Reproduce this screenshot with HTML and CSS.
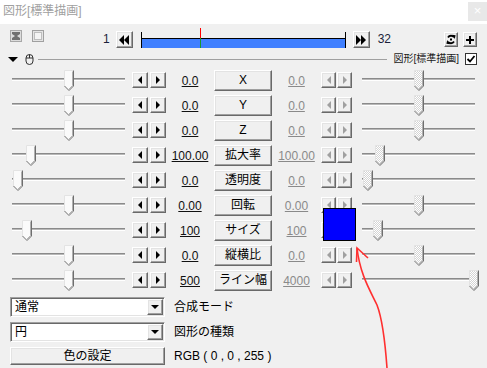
FILE: index.html
```html
<!DOCTYPE html>
<html lang="ja">
<head>
    <meta charset="UTF-8">
    <title>図形[標準描画]</title>
    <link rel="stylesheet" href="styles.css">
</head>
<body>
    <svg class="defs" width="0" height="0">
        <defs>
            <pattern id="dots" width="2" height="2" patternUnits="userSpaceOnUse">
                <rect width="2" height="2" fill="#ffffff"/>
                <rect width="1" height="1" fill="#d4d4d4"/>
                <rect x="1" y="1" width="1" height="1" fill="#d4d4d4"/>
            </pattern>
            <symbol id="thumb" viewBox="0 0 10 21">
                <polygon points="0.5,0.5 9.5,0.5 9.5,16 5,20.5 0.5,16" fill="#fafafa"/>
                <polyline points="0.5,16 0.5,0.5 9.5,0.5" fill="none" stroke="#e3e3e3"/>
                <polyline points="8.5,1.5 8.5,15.6 5,19.1" fill="none" stroke="#b0b0b0"/>
                <polyline points="9.5,0.5 9.5,16 5,20.5 0.5,16" fill="none" stroke="#6e6e6e"/>
            </symbol>
            <symbol id="thumb-off" viewBox="0 0 10 21">
                <polygon points="0.5,0.5 9.5,0.5 9.5,16 5,20.5 0.5,16" fill="url(#dots)"/>
                <polyline points="0.5,16 0.5,0.5 9.5,0.5" fill="none" stroke="#e3e3e3"/>
                <polyline points="8.5,1.5 8.5,15.6 5,19.1" fill="none" stroke="#b0b0b0"/>
                <polyline points="9.5,0.5 9.5,16 5,20.5 0.5,16" fill="none" stroke="#6e6e6e"/>
            </symbol>
        </defs>
    </svg>

    <div class="window">
        <div class="titlebar">
            <span class="title">図形[標準描画]</span>
            <span class="close">×</span>
        </div>

        <!-- frame toolbar -->
        <div class="toolbar">
            <svg class="tool-icon first" width="12" height="12" viewBox="0 0 12 12">
                <rect x="0.5" y="0.5" width="11" height="11" fill="#dcdcdc" stroke="#a8a8a8"/>
                <polygon points="2,2 10,2 10,4 7,6 10,8 10,10 2,10 2,8 5,6 2,4" fill="#707070"/>
            </svg>
            <svg class="tool-icon" width="12" height="12" viewBox="0 0 12 12">
                <rect x="0.5" y="0.5" width="11" height="11" fill="#e4e4e4" stroke="#a0a0a0"/>
                <rect x="2.5" y="2.5" width="7" height="7" fill="#f4f4f4" stroke="#909090" stroke-dasharray="1 1"/>
            </svg>
            <span class="frame-no start">1</span>
            <span class="btn seek back">
                <svg width="11" height="10" viewBox="0 0 11 10"><polygon points="5,0 5,10 0,5"/><polygon points="10,0 10,10 5,5"/></svg>
            </span>
            <div class="timeline">
                <div class="bar"><div class="bar-fill"></div></div>
                <div class="cursor" style="left:59px"></div>
            </div>
            <span class="btn seek fwd">
                <svg width="11" height="10" viewBox="0 0 11 10"><polygon points="0,0 0,10 5,5"/><polygon points="5,0 5,10 10,5"/></svg>
            </span>
            <span class="frame-no end">32</span>
            <span class="btn mini first-mini">
                <svg width="10" height="11" viewBox="0 0 10 11">
                    <path d="M2 3.5 A3.6 3.6 0 0 1 8 3.2" fill="none" stroke="#000" stroke-width="1.8"/>
                    <polygon points="6.2,0.8 9.6,1.2 8.8,5"/>
                    <path d="M8 7.5 A3.6 3.6 0 0 1 2 7.8" fill="none" stroke="#000" stroke-width="1.8"/>
                    <polygon points="3.8,10.2 0.4,9.8 1.2,6"/>
                    <rect x="4" y="4.5" width="2" height="2"/>
                </svg>
            </span>
            <span class="btn mini">
                <svg width="10" height="10" viewBox="0 0 10 10"><rect x="1" y="4" width="8" height="2"/><rect x="4" y="1" width="2" height="8"/></svg>
            </span>
        </div>

        <div class="layer-bar">
            <span class="collapse"></span>
            <svg class="mouse" width="9" height="11" viewBox="0 0 9 11">
                <path d="M1 4 Q1 0.5 4.5 0.5 Q8 0.5 8 4 V7 Q8 10.5 4.5 10.5 Q1 10.5 1 7 Z M1 4 H8 M4.5 0.5 V4" fill="none" stroke="#303030"/>
            </svg>
            <span class="rule"></span>
            <span class="layer-name">図形[標準描画]</span>
            <span class="checkbox">
                <svg width="10" height="10" viewBox="0 0 10 10"><polyline points="1.5,5 4,7.5 8.5,2" fill="none" stroke="#000" stroke-width="1.8"/></svg>
            </span>
        </div>

        <!-- track bars -->
        <div class="params">
            <div class="param-row">
                <div class="slider"><div class="track"></div><svg class="thumb" style="left:56px"><use href="#thumb"/></svg></div>
                <div class="spin"><span class="spin-btn"><i class="tri-l"></i></span><span class="spin-btn"><i class="tri-r"></i></span></div>
                <span class="value">0.0</span>
                <span class="label-btn">X</span>
                <span class="value off">0.0</span>
                <div class="spin off"><span class="spin-btn"><i class="tri-l"></i></span><span class="spin-btn"><i class="tri-r"></i></span></div>
                <div class="slider"><div class="track"></div><svg class="thumb" style="left:56px"><use href="#thumb-off"/></svg></div>
            </div>
            <div class="param-row">
                <div class="slider"><div class="track"></div><svg class="thumb" style="left:56px"><use href="#thumb"/></svg></div>
                <div class="spin"><span class="spin-btn"><i class="tri-l"></i></span><span class="spin-btn"><i class="tri-r"></i></span></div>
                <span class="value">0.0</span>
                <span class="label-btn">Y</span>
                <span class="value off">0.0</span>
                <div class="spin off"><span class="spin-btn"><i class="tri-l"></i></span><span class="spin-btn"><i class="tri-r"></i></span></div>
                <div class="slider"><div class="track"></div><svg class="thumb" style="left:56px"><use href="#thumb-off"/></svg></div>
            </div>
            <div class="param-row">
                <div class="slider"><div class="track"></div><svg class="thumb" style="left:56px"><use href="#thumb"/></svg></div>
                <div class="spin"><span class="spin-btn"><i class="tri-l"></i></span><span class="spin-btn"><i class="tri-r"></i></span></div>
                <span class="value">0.0</span>
                <span class="label-btn">Z</span>
                <span class="value off">0.0</span>
                <div class="spin off"><span class="spin-btn"><i class="tri-l"></i></span><span class="spin-btn"><i class="tri-r"></i></span></div>
                <div class="slider"><div class="track"></div><svg class="thumb" style="left:56px"><use href="#thumb-off"/></svg></div>
            </div>
            <div class="param-row">
                <div class="slider"><div class="track"></div><svg class="thumb" style="left:18px"><use href="#thumb"/></svg></div>
                <div class="spin"><span class="spin-btn"><i class="tri-l"></i></span><span class="spin-btn"><i class="tri-r"></i></span></div>
                <span class="value">100.00</span>
                <span class="label-btn">拡大率</span>
                <span class="value off">100.00</span>
                <div class="spin off"><span class="spin-btn"><i class="tri-l"></i></span><span class="spin-btn"><i class="tri-r"></i></span></div>
                <div class="slider"><div class="track"></div><svg class="thumb" style="left:17px"><use href="#thumb-off"/></svg></div>
            </div>
            <div class="param-row">
                <div class="slider"><div class="track"></div><svg class="thumb" style="left:5px"><use href="#thumb"/></svg></div>
                <div class="spin"><span class="spin-btn"><i class="tri-l"></i></span><span class="spin-btn"><i class="tri-r"></i></span></div>
                <span class="value">0.0</span>
                <span class="label-btn">透明度</span>
                <span class="value off">0.0</span>
                <div class="spin off"><span class="spin-btn"><i class="tri-l"></i></span><span class="spin-btn"><i class="tri-r"></i></span></div>
                <div class="slider"><div class="track"></div><svg class="thumb" style="left:5px"><use href="#thumb-off"/></svg></div>
            </div>
            <div class="param-row">
                <div class="slider"><div class="track"></div><svg class="thumb" style="left:56px"><use href="#thumb"/></svg></div>
                <div class="spin"><span class="spin-btn"><i class="tri-l"></i></span><span class="spin-btn"><i class="tri-r"></i></span></div>
                <span class="value">0.00</span>
                <span class="label-btn">回転</span>
                <span class="value off">0.00</span>
                <div class="spin off"><span class="spin-btn"><i class="tri-l"></i></span><span class="spin-btn"><i class="tri-r"></i></span></div>
                <div class="slider"><div class="track"></div><svg class="thumb" style="left:56px"><use href="#thumb-off"/></svg></div>
            </div>
            <div class="param-row">
                <div class="slider"><div class="track"></div><svg class="thumb" style="left:14px"><use href="#thumb"/></svg></div>
                <div class="spin"><span class="spin-btn"><i class="tri-l"></i></span><span class="spin-btn"><i class="tri-r"></i></span></div>
                <span class="value">100</span>
                <span class="label-btn">サイズ</span>
                <span class="value off">100</span>
                <div class="spin off"><span class="spin-btn"><i class="tri-l"></i></span><span class="spin-btn"><i class="tri-r"></i></span></div>
                <div class="slider"><div class="track"></div><svg class="thumb" style="left:15px"><use href="#thumb-off"/></svg></div>
            </div>
            <div class="param-row">
                <div class="slider"><div class="track"></div><svg class="thumb" style="left:56px"><use href="#thumb"/></svg></div>
                <div class="spin"><span class="spin-btn"><i class="tri-l"></i></span><span class="spin-btn"><i class="tri-r"></i></span></div>
                <span class="value">0.0</span>
                <span class="label-btn">縦横比</span>
                <span class="value off">0.0</span>
                <div class="spin off"><span class="spin-btn"><i class="tri-l"></i></span><span class="spin-btn"><i class="tri-r"></i></span></div>
                <div class="slider"><div class="track"></div><svg class="thumb" style="left:56px"><use href="#thumb-off"/></svg></div>
            </div>
            <div class="param-row">
                <div class="slider"><div class="track"></div><svg class="thumb" style="left:56px"><use href="#thumb"/></svg></div>
                <div class="spin"><span class="spin-btn"><i class="tri-l"></i></span><span class="spin-btn"><i class="tri-r"></i></span></div>
                <span class="value">500</span>
                <span class="label-btn">ライン幅</span>
                <span class="value off">4000</span>
                <div class="spin off"><span class="spin-btn"><i class="tri-l"></i></span><span class="spin-btn"><i class="tri-r"></i></span></div>
                <div class="slider"><div class="track"></div><svg class="thumb" style="left:111px"><use href="#thumb-off"/></svg></div>
            </div>
        </div>

        <div class="bottom">
            <div class="combo"><span class="combo-text">通常</span><span class="combo-btn"><i class="tri-d"></i></span></div>
            <span class="caption">合成モード</span>
            <div class="combo"><span class="combo-text">円</span><span class="combo-btn"><i class="tri-d"></i></span></div>
            <span class="caption">図形の種類</span>
            <span class="color-btn">色の設定</span>
            <span class="caption">RGB ( 0 , 0 , 255 )</span>
        </div>

        <div class="swatch"></div>
        <svg class="annotation" width="487" height="368" viewBox="0 0 487 368">
            <path d="M357 248 C360 275 371 292 377 305 C382 318 385 340 387 368" fill="none" stroke="#ff3030" stroke-width="1.6"/>
            <path d="M356.5 262 L357 248 L368 258" fill="none" stroke="#ff3030" stroke-width="1.6"/>
        </svg>
    </div>
</body>
</html>
```

FILE: styles.css
```css
* {
    box-sizing: border-box;
}
body {
    margin: 0;
    background: #f0f0f0;
    font-family: "Liberation Sans", "Noto Sans CJK JP", sans-serif;
    font-size: 12px;
    color: #000;
}
.defs {
    position: absolute;
}
.window {
    position: relative;
    width: 487px;
    height: 368px;
    overflow: hidden;
}

/* title */
.titlebar {
    height: 24px;
    background: #fff;
    display: flex;
    justify-content: space-between;
    align-items: flex-start;
}
.title {
    color: #a0a0a0;
    font-size: 12px;
    line-height: 22px;
    padding-left: 3px;
}
.close {
    width: 19px;
    height: 19px;
    margin-top: 2px;
    background: #e8e8e8;
    color: #fff;
    font-size: 13px;
    line-height: 18px;
    text-align: center;
}

/* raised classic controls */
.btn,
.spin-btn,
.label-btn,
.combo-btn,
.color-btn {
    background: #f0f0f0;
    border: 1px solid;
    border-color: #fff #696969 #696969 #fff;
    box-shadow: inset -1px -1px #a0a0a0, inset 1px 1px #e3e3e3;
}

.toolbar {
    height: 26px;
    display: flex;
    align-items: flex-start;
    padding-top: 7px;
}
.tool-icon {
    display: block;
    margin-top: -1px;
    margin-left: 10px;
}
.frame-no {
    line-height: 17px;
    color: #1a1f3a;
}
.frame-no.start {
    margin-left: 59px;
}
.frame-no.end {
    margin-left: 8px;
}
.btn {
    display: flex;
    align-items: center;
    justify-content: center;
}
.seek {
    width: 17px;
    height: 17px;
}
.seek.back {
    margin-left: 6px;
}
.seek.fwd {
    margin-left: 7px;
}
.timeline {
    position: relative;
    width: 205px;
    height: 20px;
    margin-top: -3px;
    margin-left: 8px;
    padding-top: 4px;
}
.bar {
    height: 16px;
    border-left: 1px solid #000;
    border-right: 1px solid #000;
    padding-top: 6px;
}
.bar-fill {
    height: 10px;
    border-top: 1px solid #000;
    background: #4080ff;
}
.cursor {
    position: absolute;
    top: 0;
    width: 1px;
    height: 20px;
    background: linear-gradient(#ff0000 50%, #1a9a2a 50%);
}
.mini {
    width: 14px;
    height: 15px;
    margin-top: 1px;
    margin-left: 5px;
}
.mini.first-mini {
    margin-left: auto;
}
.mini:last-child {
    margin-right: 10px;
}

/* layer header */
.layer-bar {
    height: 16px;
    display: flex;
    align-items: center;
    padding: 2px 10px 0 8px;
}
.collapse {
    width: 0;
    height: 0;
    border-top: 5px solid #000;
    border-left: 5px solid transparent;
    border-right: 5px solid transparent;
}
.mouse {
    display: block;
    margin-left: 7px;
}
.rule {
    flex: 1;
    height: 1px;
    background: #a0a0a0;
    margin: 0 6px 0 4px;
}
.layer-name {
    font-size: 10px;
    line-height: 12px;
    color: #1a1a1a;
}
.checkbox {
    width: 12px;
    height: 12px;
    margin-left: 6px;
    background: #fff;
    border: 1px solid #333;
    display: flex;
    align-items: center;
    justify-content: center;
}

/* parameter rows */
.param-row {
    display: grid;
    grid-template-columns: 121px 37px 48px 58px 49px 37px 121px;
    height: 25px;
    padding-left: 8px;
    align-items: start;
}
.slider {
    position: relative;
    height: 25px;
    padding: 12px 4px 0;
}
.track {
    height: 3px;
    border-top: 1px solid #8a8a8a;
    background: #b8b8b8;
    border-bottom: 1px solid #fff;
}
.thumb {
    position: absolute;
    top: 4px;
    width: 10px;
    height: 21px;
}
.spin {
    display: flex;
    justify-content: flex-end;
    gap: 2px;
    margin-top: 6px;
}
.spin.off {
    justify-content: flex-start;
    gap: 1px;
}
.spin-btn {
    width: 16px;
    height: 16px;
    display: flex;
    align-items: center;
    justify-content: center;
}
.spin.off .spin-btn {
    width: 15px;
}
.tri-l,
.tri-r {
    width: 0;
    height: 0;
    border-top: 4px solid transparent;
    border-bottom: 4px solid transparent;
}
.tri-l {
    border-right: 4px solid #000;
}
.tri-r {
    border-left: 4px solid #000;
}
.spin.off .tri-l {
    border-right-color: #a0a0a0;
}
.spin.off .tri-r {
    border-left-color: #a0a0a0;
}
.value {
    margin-top: 5px;
    line-height: 20px;
    text-align: center;
    text-decoration: underline;
    color: #111;
}
.value.off {
    color: #8a8a8a;
}
.label-btn {
    margin-top: 4px;
    height: 21px;
    line-height: 19px;
    text-align: center;
}

/* bottom settings */
.bottom {
    display: grid;
    grid-template-columns: 155px auto;
    grid-template-rows: 20px 20px 18px;
    column-gap: 9px;
    row-gap: 5px;
    padding: 6px 0 0 10px;
    align-items: center;
}
.combo {
    height: 20px;
    display: flex;
    align-items: center;
    justify-content: space-between;
    background: #fff;
    border: 1px solid;
    border-color: #a0a0a0 #fff #fff #a0a0a0;
    box-shadow: inset 1px 1px #696969, inset -1px -1px #e3e3e3;
    padding: 0 1px 0 4px;
}
.combo-text {
    line-height: 16px;
}
.combo-btn {
    width: 16px;
    height: 16px;
    display: flex;
    align-items: center;
    justify-content: center;
}
.tri-d {
    width: 0;
    height: 0;
    border-top: 4px solid #000;
    border-left: 4px solid transparent;
    border-right: 4px solid transparent;
}
.caption {
    line-height: 16px;
}
.color-btn {
    height: 18px;
    line-height: 16px;
    text-align: center;
}

/* overlays */
.swatch {
    position: absolute;
    left: 323px;
    top: 208px;
    width: 33px;
    height: 33px;
    background: #0000ff;
    border: 1px solid #000;
}
.annotation {
    position: absolute;
    left: 0;
    top: 0;
    pointer-events: none;
}
```
